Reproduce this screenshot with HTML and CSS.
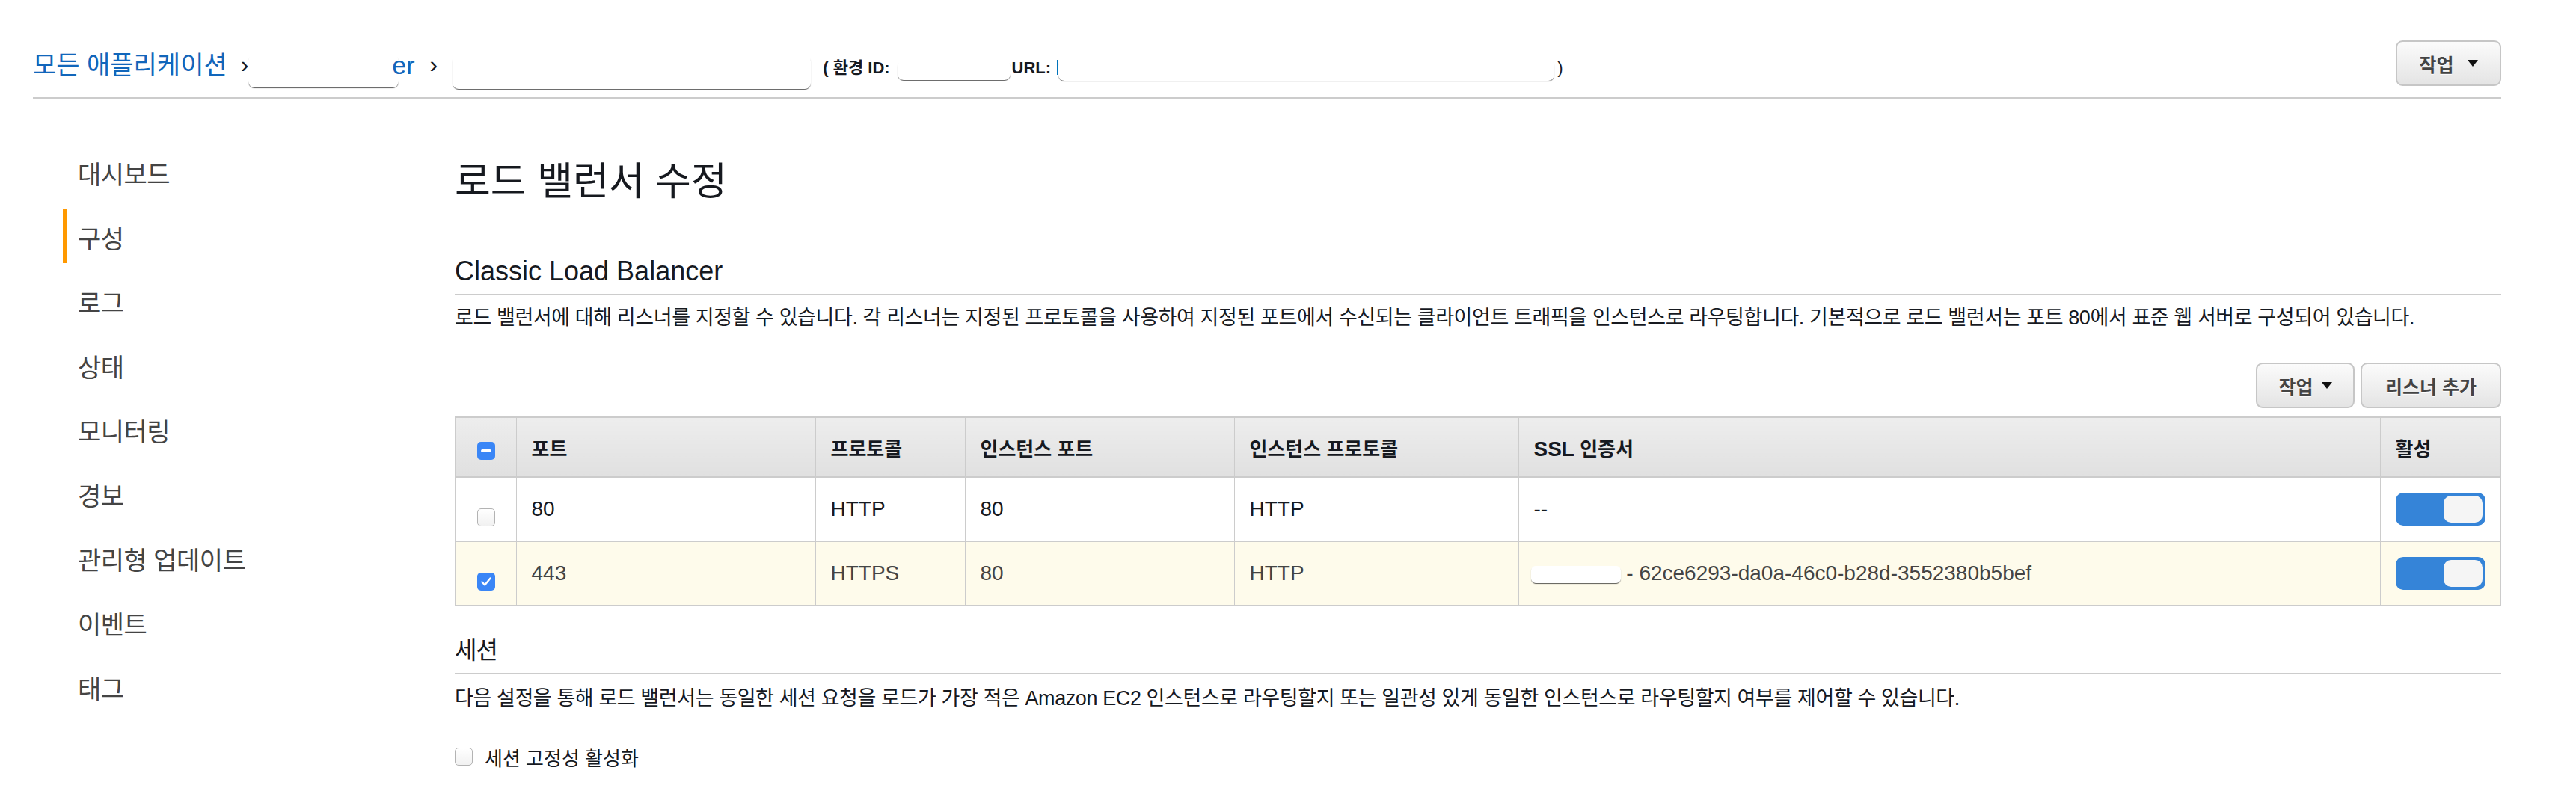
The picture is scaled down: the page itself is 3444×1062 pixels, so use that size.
FILE: index.html
```html
<!DOCTYPE html>
<html lang="ko">
<head>
<meta charset="utf-8">
<title>로드 밸런서 수정</title>
<link rel="stylesheet" href="styles.css">
</head>
<body>
<div class="page">
  <header class="topbar">
    <nav class="crumbs">
      <a class="crumb-link">모든 애플리케이션</a>
      <span class="chev chev-1">›</span>
      <span class="redact r1"></span><a class="crumb-link crumb-er">er</a>
      <span class="chev chev-2">›</span>
      <span class="redact r2"></span>
      <span class="env env-id">( 환경 ID:</span>
      <span class="redact r3"></span>
      <span class="env env-url">URL:</span>
      <span class="url-bar"></span>
      <span class="redact r4"></span>
      <span class="env env-close">)</span>
    </nav>
    <button class="btn btn-top">작업<span class="caret caret-wide"></span></button>
  </header>

  <div class="layout">
    <ul class="sidenav">
      <li class="nav-item">대시보드</li>
      <li class="nav-item active">구성</li>
      <li class="nav-item">로그</li>
      <li class="nav-item">상태</li>
      <li class="nav-item">모니터링</li>
      <li class="nav-item">경보</li>
      <li class="nav-item">관리형 업데이트</li>
      <li class="nav-item">이벤트</li>
      <li class="nav-item">태그</li>
    </ul>

    <main class="main">
      <h1 class="title">로드 밸런서 수정</h1>

      <section class="section">
        <h2 class="sec-title">Classic Load Balancer</h2>
        <p class="desc">로드 밸런서에 대해 리스너를 지정할 수 있습니다. 각 리스너는 지정된 프로토콜을 사용하여 지정된 포트에서 수신되는 클라이언트 트래픽을 인스턴스로 라우팅합니다. 기본적으로 로드 밸런서는 포트 80에서 표준 웹 서버로 구성되어 있습니다.</p>
        <div class="toolbar">
          <button class="btn btn-actions">작업<span class="caret"></span></button>
          <button class="btn btn-add">리스너 추가</button>
        </div>
        <table class="listeners">
          <colgroup>
            <col class="c-check"><col class="c-port"><col class="c-proto"><col class="c-iport"><col class="c-iproto"><col class="c-ssl"><col class="c-active">
          </colgroup>
          <thead>
            <tr>
              <th class="cb-cell cb-head"><span class="cb mixed"></span></th>
              <th>포트</th>
              <th>프로토콜</th>
              <th>인스턴스 포트</th>
              <th>인스턴스 프로토콜</th>
              <th><span class="lat">SSL</span> 인증서</th>
              <th>활성</th>
            </tr>
          </thead>
          <tbody>
            <tr>
              <td class="cb-cell"><span class="cb"></span></td>
              <td>80</td>
              <td>HTTP</td>
              <td>80</td>
              <td>HTTP</td>
              <td>--</td>
              <td><span class="toggle"><span class="knob"></span></span></td>
            </tr>
            <tr class="selected">
              <td class="cb-cell"><span class="cb on"><svg viewBox="0 0 24 24" width="24" height="24"><path d="M6.5 12.5 L10.2 16.5 L17.5 7.5" fill="none" stroke="#fff" stroke-width="2.4" stroke-linecap="round" stroke-linejoin="round"/></svg></span></td>
              <td>443</td>
              <td>HTTPS</td>
              <td>80</td>
              <td>HTTP</td>
              <td><span class="redact r-cert"></span> - 62ce6293-da0a-46c0-b28d-3552380b5bef</td>
              <td><span class="toggle"><span class="knob"></span></span></td>
            </tr>
          </tbody>
        </table>
      </section>

      <section class="section">
        <h2 class="sec-title sec-title-ko">세션</h2>
        <p class="desc desc-session">다음 설정을 통해 로드 밸런서는 동일한 세션 요청을 로드가 가장 적은 Amazon EC2 인스턴스로 라우팅할지 또는 일관성 있게 동일한 인스턴스로 라우팅할지 여부를 제어할 수 있습니다.</p>
        <label class="check-row"><span class="cb"></span><span class="check-label">세션 고정성 활성화</span></label>
      </section>
    </main>
  </div>
</div>
</body>
</html>
```

FILE: styles.css
```css
* { box-sizing: border-box; }

html, body {
  margin: 0;
  padding: 0;
  background: #fff;
}

body {
  font-family: "Liberation Sans", "Noto Sans CJK KR", sans-serif;
  color: #16191f;
  width: 3444px;
  height: 1062px;
  overflow: hidden;
}

.page {
  padding: 0 100px 0 44px;
}

/* ---------- top bar ---------- */
.topbar {
  display: flex;
  justify-content: space-between;
  align-items: flex-start;
  height: 132px;
  padding-top: 54px;
  border-bottom: 2px solid #ccc;
}

.crumbs {
  display: flex;
  align-items: flex-start;
}

.crumb-link {
  font-size: 34px;
  line-height: 40px;
  margin-top: 13px;
  color: #1166bb;
  text-decoration: none;
  white-space: nowrap;
}

.crumb-er {
  margin-left: -9px;
}

.chev {
  font-size: 32px;
  line-height: 40px;
  margin-top: 12px;
  color: #16191f;
}

.chev-1 { margin-left: 18px; margin-right: 0; }
.chev-2 { margin-left: 20px; margin-right: 20px; }

.redact {
  display: inline-block;
  background: #fff;
  border-radius: 8px;
  box-shadow: 0 2px 1px -1px rgba(0, 0, 0, 0.6), -1px 1px 1px -1px rgba(0, 0, 0, 0.35), 1px 1px 1px -1px rgba(0, 0, 0, 0.35);
}

.r1 { width: 201px; height: 44px; margin-top: 19px; }
.r2 { width: 479px; height: 45px; margin-top: 20px; }
.r3 { width: 151px; height: 26px; margin-top: 27px; margin-left: 10px; }
.r4 { width: 663px; height: 28px; margin-top: 26px; }

.env {
  font-size: 22px;
  line-height: 30px;
  margin-top: 22px;
  font-weight: bold;
  color: #16191f;
  white-space: nowrap;
}

.env-id { margin-left: 16px; }
.env-url { margin-left: 2px; }
.env-close { margin-left: 4px; font-weight: normal; }

.url-bar {
  width: 2px;
  height: 20px;
  margin-top: 26px;
  margin-left: 8px;
  background: #0073bb;
}

/* ---------- buttons ---------- */
.btn {
  display: inline-flex;
  align-items: center;
  justify-content: center;
  height: 61px;
  padding: 0;
  border: 2px solid #c6c6c6;
  border-radius: 9px;
  background: linear-gradient(#fbfbfb, #e4e4e4);
  font-family: "Liberation Sans", "Noto Sans CJK KR", sans-serif;
  font-size: 25px;
  font-weight: bold;
  color: #444;
  text-shadow: 0 1px 0 #fff;
  white-space: nowrap;
  cursor: pointer;
}

.btn-top {
  width: 141px;
}

.caret {
  display: inline-block;
  width: 0;
  height: 0;
  margin-left: 11px;
  border-top: 9px solid #111;
  border-left: 7.5px solid transparent;
  border-right: 7.5px solid transparent;
}

.caret-wide { margin-left: 18px; }

.btn-actions { width: 132px; }
.btn-add { width: 188px; }

/* ---------- layout ---------- */
.layout {
  display: grid;
  grid-template-columns: 564px 1fr;
}

.sidenav {
  list-style: none;
  margin: 0;
  padding: 62px 0 0 40px;
}

.nav-item {
  height: 72px;
  margin-bottom: 14px;
  padding-top: 8px;
  padding-left: 14px;
  border-left: 6px solid transparent;
  font-size: 34px;
  line-height: 64px;
  letter-spacing: -0.5px;
  color: #444;
  white-space: nowrap;
}

.nav-item.active {
  border-left-color: #ff9900;
}

/* ---------- main ---------- */
.main {
  min-width: 0;
}

.title {
  margin: 76px 0 0;
  font-size: 52px;
  line-height: 70px;
  font-weight: normal;
  color: #16191f;
}

.section {
  margin: 0;
}

.sec-title {
  margin: 63px 0 0;
  padding-bottom: 8px;
  border-bottom: 2px solid #ccc;
  font-size: 36px;
  line-height: 44px;
  font-weight: normal;
  color: #16191f;
}

.sec-title-ko {
  margin-top: 37px;
  font-size: 32px;
  letter-spacing: -1px;
}

.desc {
  margin: 12px 0 0;
  font-size: 27px;
  line-height: 36px;
  letter-spacing: -0.4px;
  color: #16191f;
  white-space: nowrap;
}

.desc-session {
  margin-top: 14px;
}

.toolbar {
  display: flex;
  justify-content: flex-end;
  gap: 8px;
  margin-top: 42px;
}

/* ---------- table ---------- */
.listeners {
  width: 100%;
  margin-top: 11px;
  table-layout: fixed;
  border-collapse: collapse;
  border: 2px solid #ccc;
}

.c-check { width: 81px; }
.c-port { width: 400px; }
.c-proto { width: 200px; }
.c-iport { width: 360px; }
.c-iproto { width: 380px; }
.c-ssl { width: 1152px; }

.listeners th,
.listeners td {
  padding: 0 0 0 20px;
  border-left: 1px solid #ccc;
  border-right: 1px solid #ccc;
  text-align: left;
  vertical-align: middle;
  white-space: nowrap;
}

.listeners th {
  height: 80px;
  border-bottom: 2px solid #ccc;
  background: linear-gradient(#ededed, #e0e0e0);
  font-size: 26px;
  font-weight: bold;
  color: #16191f;
}

.lat {
  font-size: 28px;
}

.listeners td {
  height: 86px;
  border-bottom: 2px solid #ccc;
  font-size: 28px;
  color: #16191f;
}

.listeners tr.selected td {
  background: #fefbeb;
  color: #444;
}

.listeners .cb-cell {
  padding: 18px 0 0;
  text-align: center;
}

.listeners .cb-head {
  padding-top: 6px;
}

.cb {
  display: inline-block;
  width: 24px;
  height: 24px;
  vertical-align: middle;
  border: 1px solid #b3b3b3;
  border-radius: 5px;
  background: linear-gradient(#fff, #f1f1f1);
  position: relative;
}

.cb.on,
.cb.mixed {
  border: none;
  background: #3a86f6;
}

.cb.on svg {
  display: block;
}

.cb.mixed::after {
  content: "";
  position: absolute;
  left: 5px;
  top: 10px;
  width: 14px;
  height: 4px;
  border-radius: 2px;
  background: #fff;
}

.r-cert {
  width: 120px;
  height: 23px;
  margin-left: -4px;
  vertical-align: middle;
  border-radius: 6px;
}

.toggle {
  display: inline-block;
  position: relative;
  width: 120px;
  height: 44px;
  vertical-align: middle;
  border-radius: 10px;
  background: #3584d8;
}

.knob {
  position: absolute;
  right: 4px;
  top: 4px;
  width: 52px;
  height: 36px;
  border-radius: 10px;
  background: #f5f5f5;
}

/* ---------- session ---------- */
.check-row {
  display: flex;
  align-items: center;
  margin-top: 42px;
  height: 36px;
}

.check-label {
  margin-left: 16px;
  font-size: 26px;
  color: #16191f;
}
```
